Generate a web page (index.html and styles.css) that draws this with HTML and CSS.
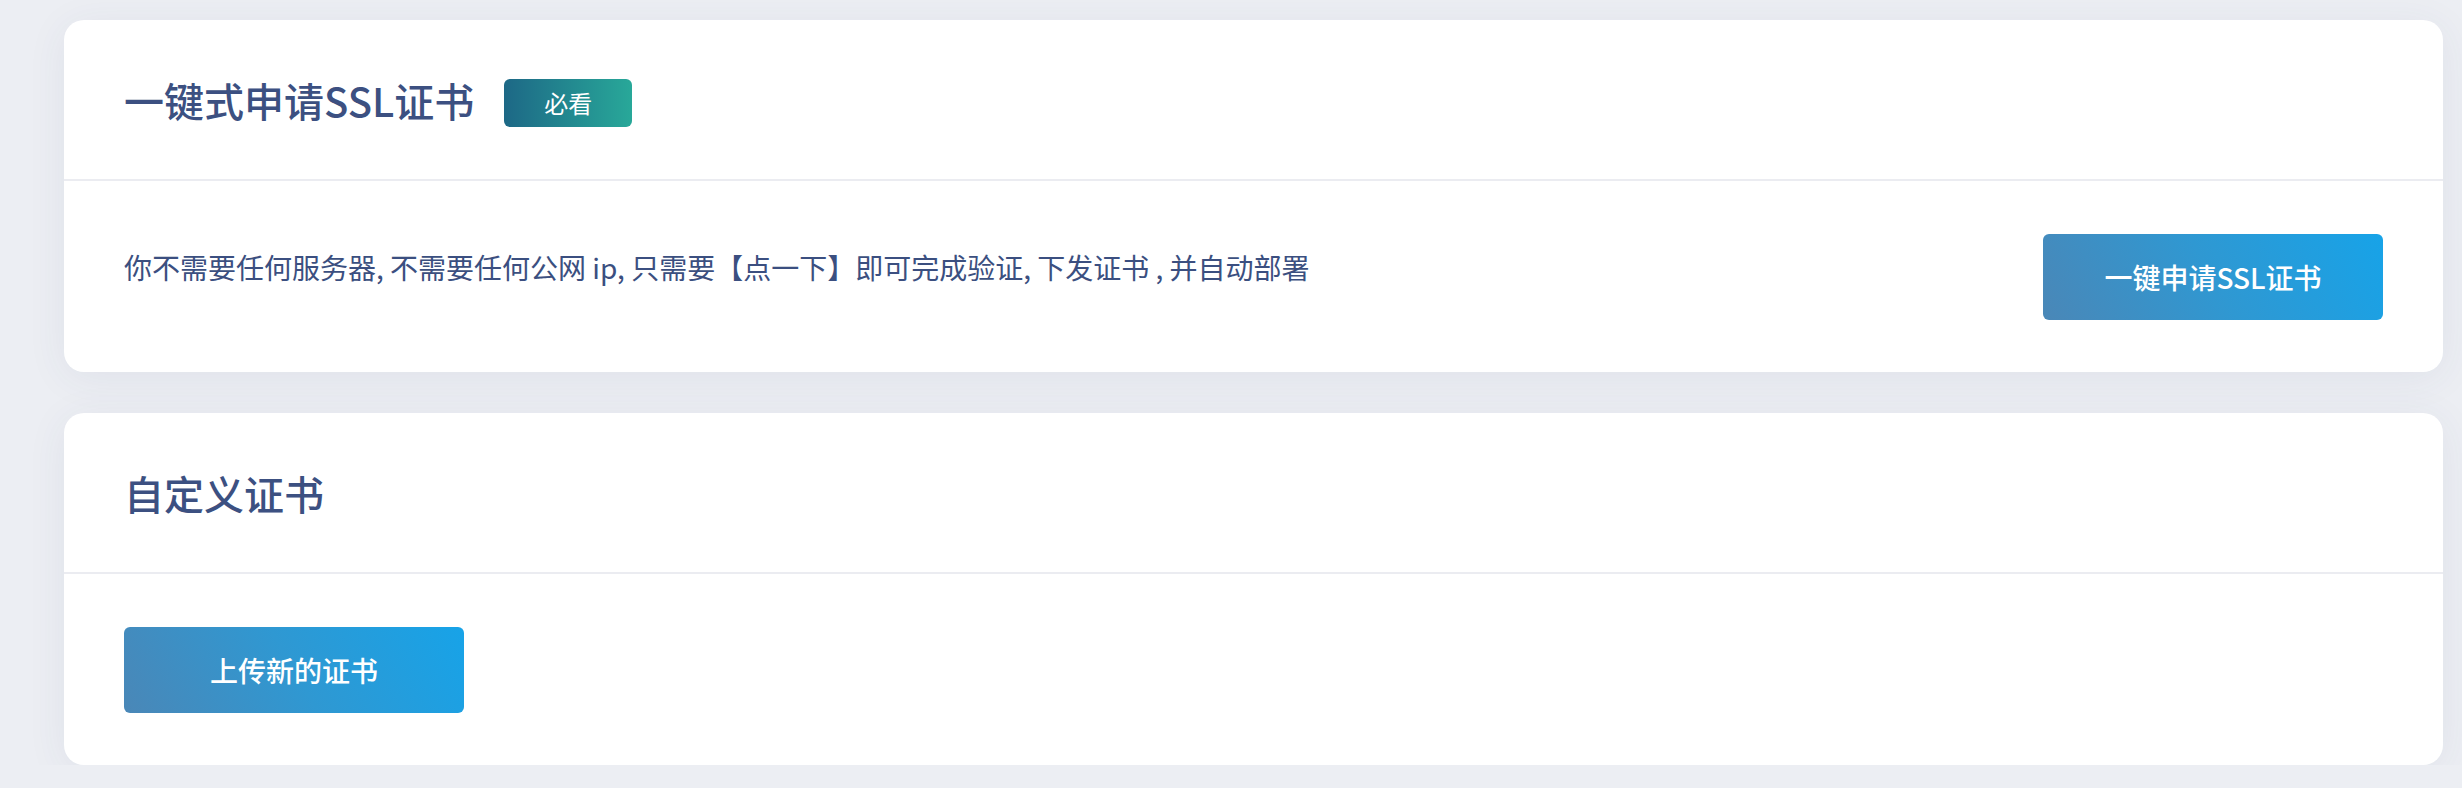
FILE: index.html
```html
<!DOCTYPE html>
<html lang="zh-CN">
<head>
<meta charset="utf-8">
<title>SSL证书</title>
<link rel="stylesheet" href="styles.css">
</head>
<body>
<main class="page">
  <section class="card">
    <header class="card-head">
      <h2 class="card-title">一键式申请SSL证书</h2>
      <span class="badge">必看</span>
    </header>
    <div class="card-body row">
      <p class="desc">你不需要任何服务器, 不需要任何公网 ip, 只需要【点一下】即可完成验证, 下发证书 , 并自动部署</p>
      <button class="btn">一键申请SSL证书</button>
    </div>
  </section>
  <section class="card">
    <header class="card-head">
      <h2 class="card-title">自定义证书</h2>
    </header>
    <div class="card-body">
      <button class="btn">上传新的证书</button>
    </div>
  </section>
</main>
</body>
</html>
```
FILE: styles.css
```css
* { box-sizing: border-box; }
html, body { margin: 0; padding: 0; }
body {
  background: #eceef3;
  font-family: "Noto Sans CJK SC", "Noto Sans", sans-serif;
  color: #3b4f80;
}
.page {
  display: flex;
  flex-direction: column;
  gap: 41px;
  padding: 20px 19px 0 64px;
}
.card {
  background: #ffffff;
  border-radius: 20px;
  box-shadow: 0 6px 40px rgba(60, 70, 110, 0.07);
}
.card-head {
  height: 161px;
  display: flex;
  align-items: center;
  gap: 30px;
  padding: 0 60px;
  border-bottom: 2px solid #ebecf1;
}
.card-title {
  margin: 0;
  font-size: 40px;
  font-weight: 500;
  color: #3c5081;
  line-height: 1;
}
.badge {
  display: inline-flex;
  align-items: center;
  justify-content: center;
  width: 128px;
  height: 48px;
  border-radius: 6px;
  background: linear-gradient(90deg, #1d6886, #28a899);
  color: #ffffff;
  font-size: 24px;
  margin-top: 6px;
}
.card-body {
  height: 191px;
  display: flex;
  align-items: center;
  padding: 0 60px;
}
.card-body.row {
  justify-content: space-between;
}
.desc {
  margin: 0 0 18px 0;
  font-size: 28px;
  line-height: 1.3;
  color: #3b4f80;
}
.btn {
  width: 340px;
  height: 86px;
  border: none;
  border-radius: 6px;
  background: linear-gradient(60deg, #4a87b7 0%, #2f98d2 50%, #17a3e8 100%);
  color: #ffffff;
  font-family: "Noto Sans CJK SC", "Noto Sans", sans-serif;
  font-size: 28px;
  font-weight: 500;
  cursor: pointer;
}
```
